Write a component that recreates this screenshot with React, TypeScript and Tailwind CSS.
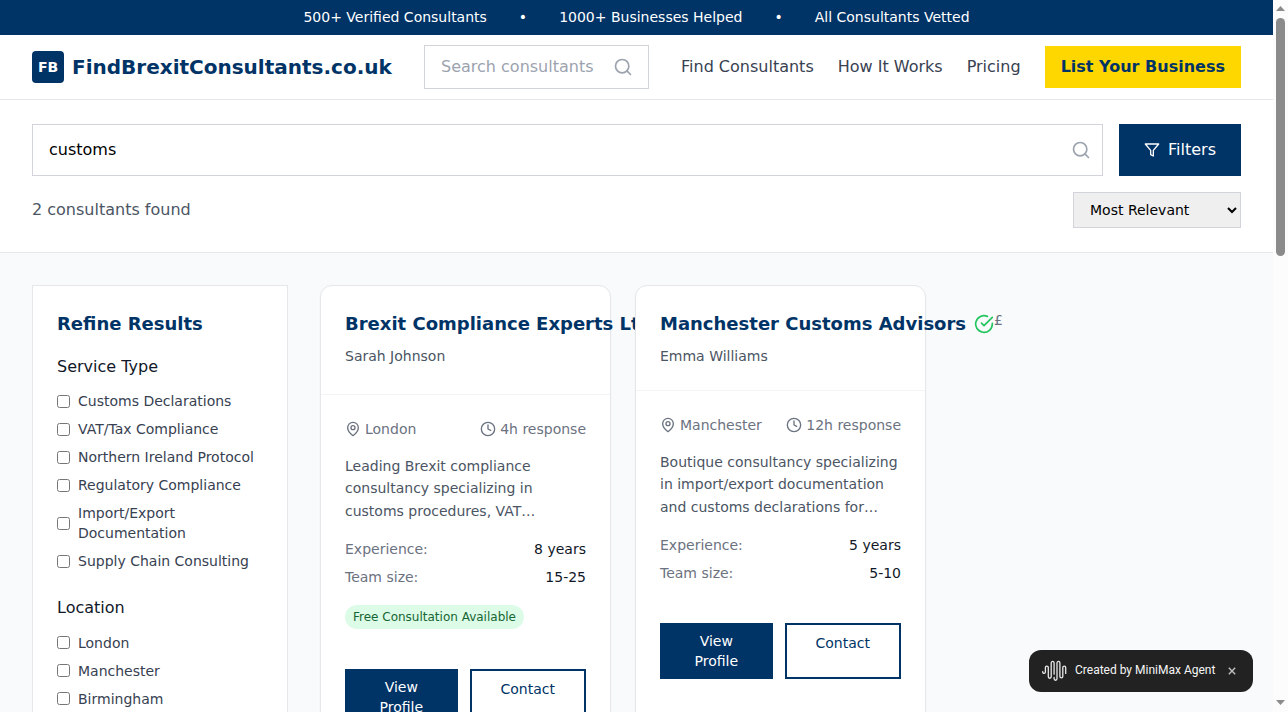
import type { ReactNode } from 'react';

type IconProps = { className: string; children: ReactNode };

function Icon({ className, children }: IconProps) {
  return (
    <svg className={className} viewBox="0 0 24 24" fill="none" stroke="currentColor" strokeWidth="2" strokeLinecap="round" strokeLinejoin="round">
      {children}
    </svg>
  );
}

function SearchIcon({ className }: { className: string }) {
  return (
    <Icon className={className}>
      <circle cx="11" cy="11" r="8" />
      <path d="m21 21-4.3-4.3" />
    </Icon>
  );
}

function FilterGroup({ title, options }: { title: string; options: string[] }) {
  return (
    <div className="mb-6">
      <h4 className="mb-3 text-base leading-[25.4px] text-[#111827]">{title}</h4>
      <div className="flex flex-col gap-2">
        {options.map((option) => (
          <label key={option} className="flex items-center text-sm text-[#374151]">
            <input type="checkbox" className="mr-2 size-[13px] shrink-0" />
            <span>{option}</span>
          </label>
        ))}
      </div>
    </div>
  );
}

type Consultant = {
  name: string;
  contact: string;
  price: string;
  location: string;
  response: string;
  about: string;
  experience: string;
  team: string;
  free: boolean;
  headClass: string;
};

const consultants: Consultant[] = [
  {
    name: 'Brexit Compliance Experts Ltd',
    contact: 'Sarah Johnson',
    price: '££',
    location: 'London',
    response: '4h response',
    about: 'Leading Brexit compliance consultancy specializing in customs procedures, VAT…',
    experience: '8 years',
    team: '15-25',
    free: true,
    headClass: 'h-[109px]',
  },
  {
    name: 'Manchester Customs Advisors',
    contact: 'Emma Williams',
    price: '£',
    location: 'Manchester',
    response: '12h response',
    about: 'Boutique consultancy specializing in import/export documentation and customs declarations for…',
    experience: '5 years',
    team: '5-10',
    free: false,
    headClass: 'h-[105px]',
  },
];

function Card({ c }: { c: Consultant }) {
  return (
    <article className="min-w-0 rounded-xl border border-[#e5e7eb] bg-white shadow-[0_1px_2px_0_rgb(0_0_0/0.05)]">
      <div className={`${c.headClass} flex items-start border-b border-[#f3f4f6] p-6`}>
        <div className="shrink-0">
          <div className="mb-2 flex items-center gap-2 whitespace-nowrap">
            <h3 className="text-lg font-bold text-[#003366]">{c.name}</h3>
            <Icon className="size-5 text-[#22c55e]">
              <path d="M22 11.08V12a10 10 0 1 1-5.93-9.14" />
              <path d="m9 11 3 3L22 4" />
            </Icon>
          </div>
          <p className="text-sm text-[#4b5563]">{c.contact}</p>
        </div>
        <span className="text-sm text-[#6b7280]">{c.price}</span>
      </div>
      <div className="px-6 pt-6 text-sm">
        <div className="mb-4 flex items-center justify-between text-[#6b7280]">
          <span className="flex items-center gap-1">
            <Icon className="size-4">
              <path d="M20 10c0 6-8 12-8 12s-8-6-8-12a8 8 0 0 1 16 0Z" />
              <circle cx="12" cy="10" r="3" />
            </Icon>
            {c.location}
          </span>
          <span className="flex items-center gap-1">
            <Icon className="size-4">
              <circle cx="12" cy="12" r="10" />
              <path d="M12 6v6l4 2" />
            </Icon>
            {c.response}
          </span>
        </div>
        <p className="mb-[17px] leading-[22.4px] text-[#4b5563]">{c.about}</p>
        <div className="flex flex-col gap-2 text-[#6b7280]">
          <div className="flex justify-between">
            <span>Experience:</span>
            <span className="text-[#111827]">{c.experience}</span>
          </div>
          <div className="flex justify-between">
            <span>Team size:</span>
            <span className="text-[#111827]">{c.team}</span>
          </div>
        </div>
        {c.free && (
          <div className="mt-[17.75px] flex">
            <span className="rounded-full bg-[#dcfce7] px-2 py-1 text-xs text-[#166534]">Free Consultation Available</span>
          </div>
        )}
      </div>
      <div className="mt-10 flex gap-3 px-6 pb-6 text-sm">
        <button className="flex flex-1 items-start justify-center bg-[#003366] px-4 py-2 text-center text-white">View Profile</button>
        <button className="flex flex-1 items-start justify-center border-2 border-[#003366] px-4 py-2 text-center text-[#003366]">Contact</button>
      </div>
    </article>
  );
}

export default function App() {
  return (
    <div className="flex h-[712px] w-[1288px] overflow-hidden bg-[#f9fafb] font-['DejaVu_Sans',sans-serif] text-base">
      <div className="h-full w-[1273px] overflow-hidden">
        <div className="flex h-[35px] items-center justify-center gap-8 bg-[#003366] pb-0.5 text-sm text-white">
          <span>500+ Verified Consultants</span>
          <span>•</span>
          <span>1000+ Businesses Helped</span>
          <span>•</span>
          <span>All Consultants Vetted</span>
        </div>

        <header className="flex h-[65px] items-center border-b border-[#e5e7eb] bg-white px-8">
          <div className="flex w-[392px] shrink-0 items-center gap-2">
            <div className="flex size-8 items-center justify-center rounded bg-[#003366] text-sm font-bold text-white">FB</div>
            <span className="text-xl font-bold text-[#003366]">FindBrexitConsultants.co.uk</span>
          </div>
          <div className="flex h-11 w-[225px] shrink-0 items-center border border-[#d1d5db] pr-[15px] pl-4">
            <input className="w-[159px] min-w-0 placeholder:text-[#9ca3af]" placeholder="Search consultants by name" />
            <SearchIcon className="ml-[14px] size-5 shrink-0 text-[#9ca3af]" />
          </div>
          <nav className="ml-8 flex flex-1 items-center gap-6 whitespace-nowrap text-[#374151]">
            <a>Find Consultants</a>
            <a>How It Works</a>
            <a>Pricing</a>
            <a className="flex h-[42px] flex-1 items-center justify-center bg-[#ffd700] font-bold text-[#003366]">List Your Business</a>
          </nav>
        </header>

        <section className="h-[153px] border-b border-[#e5e7eb] bg-white px-8 py-6">
          <div className="flex gap-4">
            <div className="flex h-[52px] flex-1 items-center border border-[#d1d5db] pr-[11px] pl-4">
              <input className="min-w-0 flex-1 text-black" defaultValue="customs" />
              <SearchIcon className="size-5 text-[#9ca3af]" />
            </div>
            <button className="flex h-[52px] w-[122px] items-center justify-center gap-2 bg-[#003366] text-white">
              <Icon className="size-4">
                <path d="M22 3H2l8 9.46V19l4 2v-8.54L22 3z" />
              </Icon>
              Filters
            </button>
          </div>
          <div className="mt-4 flex items-center justify-between">
            <p className="text-[#4b5563]">2 consultants found</p>
            <select className="h-9 w-[168px] border border-[#d1d5db] bg-[#efefef] px-3 text-sm text-black">
              <option>Most Relevant</option>
            </select>
          </div>
        </section>

        <main className="flex items-start gap-8 px-8 pt-8">
          <aside className="w-64 shrink-0 border border-[#e5e7eb] bg-white p-6">
            <h3 className="mb-4 text-lg font-bold text-[#003366]">Refine Results</h3>
            <FilterGroup
              title="Service Type"
              options={['Customs Declarations', 'VAT/Tax Compliance', 'Northern Ireland Protocol', 'Regulatory Compliance', 'Import/Export Documentation', 'Supply Chain Consulting']}
            />
            <FilterGroup title="Location" options={['London', 'Manchester', 'Birmingham']} />
          </aside>
          <div className="grid flex-1 grid-cols-3 gap-6">
            {consultants.map((c) => (
              <Card key={c.name} c={c} />
            ))}
          </div>
        </main>
      </div>

      <div className="flex h-full w-[15px] flex-col items-center justify-between bg-[#fcfcfc]">
        <div className="flex flex-col items-center">
          <svg className="mt-[6px] h-[5px] w-[9px]" viewBox="0 0 9 5"><path d="M0 5 4.5 0 9 5z" fill="#8b8b8b" /></svg>
          <div className="mt-[7px] h-[238px] w-[9px] rounded-full bg-[#8b8b8b]" />
        </div>
        <svg className="mb-[7px] h-[5px] w-[9px]" viewBox="0 0 9 5"><path d="M0 0 4.5 5 9 0z" fill="#8b8b8b" /></svg>
      </div>

      <div className="fixed top-[650px] left-[1029px] flex h-[42px] w-[224px] items-center rounded-xl bg-[#222222] font-['Roboto',sans-serif] text-xs text-[#f5f5f5]">
        <svg className="ml-[13px] h-[22px] w-[25px] shrink-0" viewBox="0 0 25 22" fill="none" stroke="#e8e8e8" strokeWidth="1.3" strokeLinecap="round">
          <path d="M.7 11.6v.4a1.35 1.35 0 0 0 2.7 0V7.6a1.45 1.45 0 0 1 2.9 0v9.2a1.45 1.45 0 0 0 2.9 0V2.9a1.45 1.45 0 0 1 2.9 0v11.3" />
          <path d="M12.1 17.5v1.3a1.45 1.45 0 0 0 2.9 0V2.9a1.45 1.45 0 0 1 2.9 0v13.6a1.45 1.45 0 0 0 2.9 0V7.6a1.45 1.45 0 0 1 2.9 0v5.8" />
        </svg>
        <span className="mb-0.5 ml-2 w-[140px] whitespace-nowrap">Created by MiniMax Agent</span>
        <svg className="ml-[13px] size-[8px]" viewBox="0 0 8 8" stroke="#c0c0c0" strokeWidth="1.4"><path d="m.8.8 6.4 6.4M7.2.8.8 7.2" /></svg>
      </div>
    </div>
  );
}
